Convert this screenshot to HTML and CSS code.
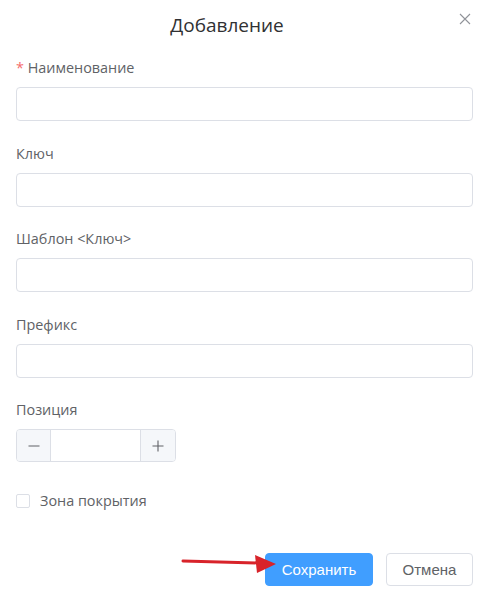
FILE: index.html
```html
<!DOCTYPE html>
<html lang="ru">
<head>
<meta charset="utf-8">
<title>Добавление</title>
<link rel="stylesheet" href="styles.css">
</head>
<body>
<div class="dialog">
  <header class="dialog-header">
    <h1 class="dialog-title">Добавление</h1>
    <button class="close-btn" aria-label="Закрыть">
      <svg width="12" height="12" viewBox="0 0 12 12"><path d="M1 1 L11 11 M11 1 L1 11" stroke="#909399" stroke-width="1.1" fill="none"/></svg>
    </button>
  </header>
  <form class="dialog-body">
    <div class="field">
      <label class="field-label"><span class="req">*</span> Наименование</label>
      <input class="text-input" type="text">
    </div>
    <div class="field">
      <label class="field-label">Ключ</label>
      <input class="text-input" type="text">
    </div>
    <div class="field">
      <label class="field-label">Шаблон &lt;Ключ&gt;</label>
      <input class="text-input" type="text">
    </div>
    <div class="field">
      <label class="field-label">Префикс</label>
      <input class="text-input" type="text">
    </div>
    <div class="field">
      <label class="field-label">Позиция</label>
      <div class="number-input">
        <span class="num-btn num-minus">
          <svg width="12" height="12" viewBox="0 0 12 12"><path d="M0.5 6 H11.5" stroke="#606266" stroke-width="1.1"/></svg>
        </span>
        <input class="num-field" type="text">
        <span class="num-btn num-plus">
          <svg width="12" height="12" viewBox="0 0 12 12"><path d="M0.5 6 H11.5 M6 0.5 V11.5" stroke="#606266" stroke-width="1.1"/></svg>
        </span>
      </div>
    </div>
    <label class="check-row">
      <span class="checkbox"></span>
      <span class="check-text">Зона покрытия</span>
    </label>
  </form>
  <footer class="dialog-footer">
    <button class="btn btn-primary">Сохранить</button>
    <button class="btn btn-default">Отмена</button>
  </footer>
  <svg class="arrow" width="100" height="30" viewBox="0 0 100 30">
    <path d="M3 11 L80 13" stroke="#d8232a" stroke-width="3" stroke-linecap="round" fill="none"/>
    <path d="M96 14 L75 5 L77 23 Z" fill="#d8232a"/>
  </svg>
</div>
</body>
</html>
```

FILE: styles.css
```css
* {
  box-sizing: border-box;
}

html, body {
  margin: 0;
  padding: 0;
  background: #ffffff;
}

body {
  font-family: "Open Sans", "Noto Sans", sans-serif;
  color: #606266;
}

.dialog {
  position: relative;
  width: 489px;
  height: 599px;
}

.dialog-header {
  position: relative;
  padding: 13px 51px 21px 16px;
}

.dialog-title {
  margin: 0;
  font-size: 19px;
  line-height: 24px;
  font-weight: 400;
  color: #303133;
  text-align: center;
}

.close-btn {
  position: absolute;
  top: 13px;
  right: 18px;
  width: 12px;
  height: 12px;
  padding: 0;
  border: 0;
  background: transparent;
  display: flex;
}

.dialog-body {
  margin: 0;
  padding: 0 16px;
}

.field {
  margin-bottom: 22.5px;
}

.field-label {
  display: block;
  font-size: 14.4px;
  line-height: 20px;
  margin-bottom: 9px;
  color: #606266;
}

.req {
  color: #f56c6c;
}

.text-input {
  display: block;
  width: 100%;
  height: 34px;
  border: 1px solid #dcdfe6;
  border-radius: 4px;
  background: #fff;
  outline: none;
  padding: 0 12px;
  font: inherit;
}

.number-input {
  display: flex;
  width: 160px;
  height: 33px;
  border: 1px solid #dcdfe6;
  border-radius: 4px;
  overflow: hidden;
}

.num-btn {
  display: flex;
  align-items: center;
  justify-content: center;
  background: #f5f7fa;
  width: 34px;
  flex: none;
}

.num-minus {
  border-right: 1px solid #dcdfe6;
}

.num-plus {
  border-left: 1px solid #dcdfe6;
  width: 35px;
}

.num-field {
  flex: 1;
  min-width: 0;
  border: 0;
  outline: none;
  background: #fff;
}

.check-row {
  display: flex;
  align-items: center;
  gap: 10px;
  margin-top: 29px;
  height: 20px;
}

.checkbox {
  width: 14px;
  height: 14px;
  border: 1px solid #dcdfe6;
  border-radius: 2px;
  background: #fff;
}

.check-text {
  font-size: 14.4px;
  line-height: 20px;
  color: #606266;
}

.dialog-footer {
  display: flex;
  justify-content: flex-end;
  gap: 13px;
  padding: 0 16px;
  margin-top: 42px;
}

.btn {
  height: 33px;
  border-radius: 4px;
  font-family: "Liberation Sans", Arial, sans-serif;
  font-size: 15px;
  padding: 0;
  cursor: pointer;
}

.btn-primary {
  width: 108px;
  background: #409eff;
  border: 1px solid #409eff;
  color: #ffffff;
}

.btn-default {
  width: 87px;
  background: #ffffff;
  border: 1px solid #dcdfe6;
  color: #606266;
}

.arrow {
  position: absolute;
  left: 180px;
  top: 550px;
  pointer-events: none;
}
```
